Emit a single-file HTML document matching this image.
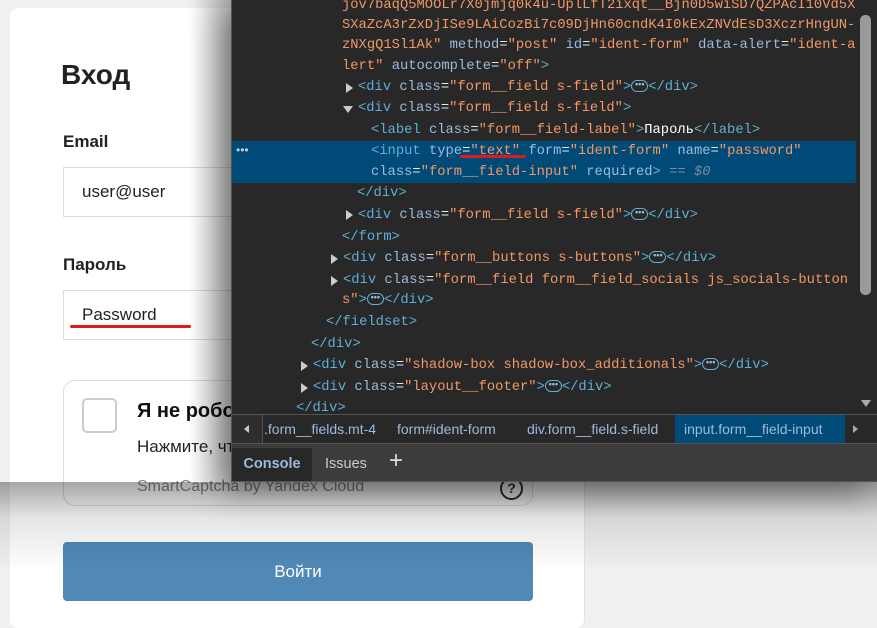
<!DOCTYPE html>
<html><head><meta charset="utf-8"><style>
*{margin:0;padding:0;box-sizing:border-box}
body{width:877px;height:605px;overflow:hidden;background:#f0f0f0;font-family:"Liberation Sans","Noto Sans CJK SC",sans-serif;position:relative}
.card{position:absolute;left:10px;top:8px;width:575px;height:620px;background:#fff;border-radius:8px;border-right:1px solid #e3e3e3}
.abs{position:absolute}
.lbl{font-weight:bold;font-size:17px;color:#222}
.inp{border:1px solid #dcdcdc;background:#fff;height:50px;width:520px;font-size:17px;color:#222;padding:14px 18px}
.dt{position:absolute;left:231px;top:0;width:646px;height:482px;background:#282828;border-left:1px solid #555;border-bottom:1px solid #555;box-shadow:-10px 8px 30px rgba(0,0,0,.4)}
.code{position:absolute;left:0;top:0;width:626px;font-family:"Liberation Mono",monospace;font-size:13.8px;color:#e8e8e8;white-space:pre}
.ln{position:absolute;height:21px;line-height:21px}
.t{color:#5db0d7}.a{color:#9bbbdc}.v{color:#f29766}
.ar{position:absolute;width:0;height:0;border-top:5px solid transparent;border-bottom:5px solid transparent;border-left:7px solid #ccc}
.dn{position:absolute;width:0;height:0;border-left:5px solid transparent;border-right:5px solid transparent;border-top:7px solid #ccc}
.el{display:inline-block;width:17px;height:12px;border:1px solid #5db0d7;border-radius:6px;font-size:9px;line-height:7px;text-align:center;color:#9bbbdc;vertical-align:middle;font-family:"Liberation Sans",sans-serif;font-weight:bold}
.bc{position:absolute;top:414px;left:0;width:646px;height:30px;background:#282828;border-top:1px solid #555;border-bottom:1px solid #555;font-size:14px;color:#9bbbdc;line-height:28px}
.tabs{position:absolute;top:444px;left:0;width:646px;height:37px;background:#3c3c3c}
</style></head><body>
<div class="card"></div>
<div class="abs" style="left:61px;top:59px;font-size:28px;font-weight:bold;color:#222">Вход</div>
<div class="abs lbl" style="left:63px;top:132px">Email</div>
<div class="abs inp" style="left:63px;top:167px">user@user</div>
<div class="abs lbl" style="left:63px;top:255px">Пароль</div>
<div class="abs inp" style="left:63px;top:290px">Password</div>
<div class="abs" style="left:70px;top:325px;width:121px;height:3px;background:#e01919;border-radius:2px"></div>
<div class="abs" style="left:63px;top:380px;width:470px;height:126px;border:1px solid #ddd;border-radius:12px;background:#fff"></div>
<div class="abs" style="left:82px;top:398px;width:35px;height:35px;border:2px solid #ccc;border-radius:5px"></div>
<div class="abs" style="left:137px;top:400px;font-size:20px;font-weight:bold;color:#111">Я не робот</div>
<div class="abs" style="left:137px;top:437px;font-size:17px;color:#222">Нажмите, чтобы продолжить</div>
<div class="abs" style="left:137px;top:478px;font-size:16px;color:#888">SmartCaptcha by Yandex Cloud</div>
<div class="abs" style="left:500px;top:477px;width:23px;height:23px;border:2.5px solid #333;border-radius:50%;font-size:14px;font-weight:bold;text-align:center;line-height:18px;color:#333">?</div>
<div class="abs" style="left:63px;top:542px;width:470px;height:59px;background:#5189b6;border-radius:4px;color:#fff;font-size:17px;text-align:center;line-height:59px">Войти</div>
<div class="abs" style="left:0;top:482px;width:877px;height:90px;background:linear-gradient(rgba(0,0,0,.35),rgba(0,0,0,.1) 40%,rgba(0,0,0,0))"></div>
<div class="abs" style="left:190px;top:0;width:41px;height:482px;background:linear-gradient(90deg,rgba(0,0,0,0),rgba(0,0,0,.25))"></div>

<div class="dt">
<div class="abs" style="left:0;top:141px;width:624px;height:42px;background:#004a77"></div>
<div class="abs" style="left:4px;top:143px;color:#ccc;font-size:12px">•••</div>
<div class="code">
<div class="ln v" style="left:110px;top:-5px">jov7baqQ5MOOLr7X0jmjq0k4u-UplLfT2ixqt__Bjn0D5wiSD7QZPAcI10Vd5X</div>
<div class="ln v" style="left:110px;top:15px">SXaZcA3rZxDjISe9LAiCozBi7c09DjHn60cndK4I0kExZNVdEsD3XczrHngUN-</div>
<div class="ln" style="left:110px;top:35px"><span class="v">zNXgQ1Sl1Ak"</span> <span class="a">method</span>=<span class="v">"post"</span> <span class="a">id</span>=<span class="v">"ident-form"</span> <span class="a">data-alert</span>=<span class="v">"ident-a</span></div>
<div class="ln" style="left:110px;top:56px"><span class="v">lert"</span> <span class="a">autocomplete</span>=<span class="v">"off"</span><span class="t">&gt;</span></div>
<div class="ar" style="left:114px;top:83px"></div>
<div class="ln" style="left:126px;top:77px"><span class="t">&lt;div</span> <span class="a">class</span>=<span class="v">"form__field s-field"</span><span class="t">&gt;</span><span class="el">•••</span><span class="t">&lt;/div&gt;</span></div>
<div class="dn" style="left:111px;top:106px"></div>
<div class="ln" style="left:126px;top:98px"><span class="t">&lt;div</span> <span class="a">class</span>=<span class="v">"form__field s-field"</span><span class="t">&gt;</span></div>
<div class="ln" style="left:139px;top:120px"><span class="t">&lt;label</span> <span class="a">class</span>=<span class="v">"form__field-label"</span><span class="t">&gt;</span><span style="color:#fff">Пароль</span><span class="t">&lt;/label&gt;</span></div>
<div class="ln" style="left:139px;top:141px"><span class="t">&lt;input</span> <span class="a">type</span>=<span class="v">"text"</span> <span class="a">form</span>=<span class="v">"ident-form"</span> <span class="a">name</span>=<span class="v">"password"</span></div>
<div class="ln" style="left:139px;top:162px"><span class="a">class</span>=<span class="v">"form__field-input"</span> <span class="a">required</span><span class="t">&gt;</span> <span style="color:#7a8a99;font-style:italic">== $0</span></div>
<div class="ln" style="left:125px;top:183px"><span class="t">&lt;/div&gt;</span></div>
<div class="ar" style="left:114px;top:210px"></div>
<div class="ln" style="left:126px;top:205px"><span class="t">&lt;div</span> <span class="a">class</span>=<span class="v">"form__field s-field"</span><span class="t">&gt;</span><span class="el">•••</span><span class="t">&lt;/div&gt;</span></div>
<div class="ln" style="left:110px;top:227px"><span class="t">&lt;/form&gt;</span></div>
<div class="ar" style="left:99px;top:254px"></div>
<div class="ln" style="left:111px;top:248px"><span class="t">&lt;div</span> <span class="a">class</span>=<span class="v">"form__buttons s-buttons"</span><span class="t">&gt;</span><span class="el">•••</span><span class="t">&lt;/div&gt;</span></div>
<div class="ar" style="left:99px;top:276px"></div>
<div class="ln" style="left:111px;top:270px"><span class="t">&lt;div</span> <span class="a">class</span>=<span class="v">"form__field form__field_socials js_socials-button</span></div>
<div class="ln" style="left:110px;top:290px"><span class="v">s"</span><span class="t">&gt;</span><span class="el">•••</span><span class="t">&lt;/div&gt;</span></div>
<div class="ln" style="left:94px;top:312px"><span class="t">&lt;/fieldset&gt;</span></div>
<div class="ln" style="left:79px;top:334px"><span class="t">&lt;/div&gt;</span></div>
<div class="ar" style="left:69px;top:361px"></div>
<div class="ln" style="left:81px;top:355px"><span class="t">&lt;div</span> <span class="a">class</span>=<span class="v">"shadow-box shadow-box_additionals"</span><span class="t">&gt;</span><span class="el">•••</span><span class="t">&lt;/div&gt;</span></div>
<div class="ar" style="left:69px;top:383px"></div>
<div class="ln" style="left:81px;top:377px"><span class="t">&lt;div</span> <span class="a">class</span>=<span class="v">"layout__footer"</span><span class="t">&gt;</span><span class="el">•••</span><span class="t">&lt;/div&gt;</span></div>
<div class="ln" style="left:64px;top:398px"><span class="t">&lt;/div&gt;</span></div>
</div>
<div class="abs" style="left:228px;top:155px;width:66px;height:3px;background:#e01919;border-radius:2px"></div>
<div class="abs" style="left:626px;top:0;width:20px;height:414px;background:#282828"></div>
<div class="abs" style="left:628px;top:15px;width:11px;height:280px;background:#9a9a9a;border-radius:5px"></div>
<div class="dn" style="left:629px;top:400px;border-top-color:#aaa"></div>
<div class="bc">
<div class="abs" style="left:0;top:0;width:31px;height:28px;border-right:1px solid #555;background:#2e2e2e"><div class="abs" style="left:12px;top:10px;width:0;height:0;border-top:4px solid transparent;border-bottom:4px solid transparent;border-right:5px solid #ccc"></div></div>
<span class="abs" style="left:32px">.form__fields.mt-4</span>
<span class="abs" style="left:165px">form#ident-form</span>
<span class="abs" style="left:295px">div.form__field.s-field</span>
<span class="abs" style="left:443px;width:170px;height:28px;background:#004a77;padding-left:9px">input.form__field-input</span>
<div class="abs" style="left:621px;top:10px;width:0;height:0;border-top:4px solid transparent;border-bottom:4px solid transparent;border-left:5px solid #aaa"></div>
</div>
<div class="tabs">
<div class="abs" style="left:0;top:4px;width:80px;height:33px;background:#282828;color:#9bbbdc;font-size:14.5px;line-height:33px;text-align:center;font-weight:bold">Console</div>
<div class="abs" style="left:93px;top:4px;color:#ccc;font-size:14.5px;line-height:33px">Issues</div>
<div class="abs" style="left:157px;top:2px;color:#ddd;font-size:24px;line-height:30px;font-weight:200">+</div>
</div>
</div>
</body></html>
